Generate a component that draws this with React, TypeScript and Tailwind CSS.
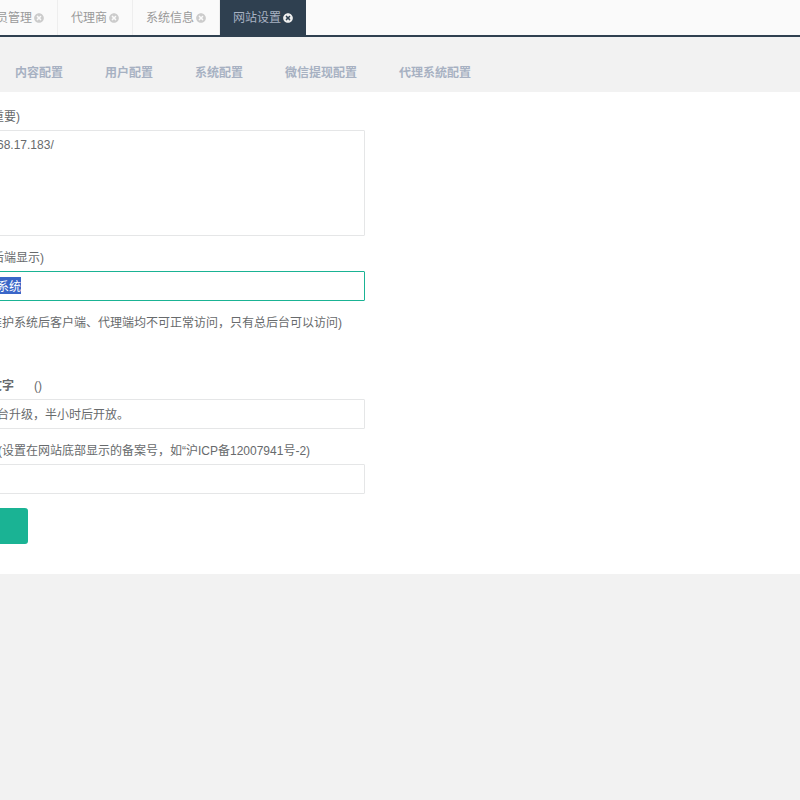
import { useEffect, useRef, useState } from "react";
import { FaTimesCircle } from "react-icons/fa";

const tabs = ["员管理", "代理商", "系统信息", "网站设置"];
const sections = ["内容配置", "用户配置", "系统配置", "微信提现配置", "代理系統配置"];

const inputClass =
  "block w-full h-[30px] border border-[#e5e6e7] rounded-[1px] bg-white px-2 pb-0.5 text-xs text-[#676a6c] outline-none focus:border-[#1ab394] selection:bg-[#3a66c8] selection:text-white";
const labelClass = "block h-4 mb-[5px] whitespace-nowrap";

export default function SiteSettings() {

  const [activeTab, setActiveTab] = useState("网站设置");
  const [domains, setDomains] = useState("68.17.183/");
  const [siteName, setSiteName] = useState("系统");
  const [notice, setNotice] = useState("台升级，半小时后开放。");
  const [icp, setIcp] = useState("");

  const nameRef = useRef<HTMLInputElement>(null);

  useEffect(() => {
    nameRef.current?.focus();
    nameRef.current?.select();
  }, []);

  const showTabs = () => {
    return tabs.map((tab) => {
      const active = tab === activeTab;
      return (
        <button
          key={tab}
          type="button"
          onClick={() => setActiveTab(tab)}
          className={
            active
              ? "flex items-center gap-0.5 h-[35px] px-[13px] bg-[#2f4050] text-[#a7b1c2]"
              : "flex items-center gap-0.5 h-[35px] px-[13px] border-r border-[#eeeeee] text-[#999999]"
          }
        >
          <span>{tab}</span>
          <FaTimesCircle size={10} className={active ? "text-[#eeeeee]" : "text-[#cccccc]"} />
        </button>
      );
    });
  };

  return (
    <div
      className="min-h-screen w-full overflow-hidden bg-[#f2f2f2] text-xs text-[#676a6c]"
      style={{ fontFamily: '"Liberation Sans", "Noto Sans CJK SC", sans-serif' }}
    >
      <div className="border-b-2 border-[#2f4050] bg-[#fafafa]">
        <div className="flex -ml-[17px] whitespace-nowrap">{showTabs()}</div>
      </div>

      <nav className="flex gap-[42px] h-[55px] pl-[15px] pt-7 whitespace-nowrap font-bold text-[#a7b1c2]">
        {sections.map((name) => (
          <a key={name} href="#">{name}</a>
        ))}
      </nav>

      <main className="bg-white pt-[17px] pb-[30px]">
        <form className="flex flex-col gap-[14px] -ml-3 w-[377px]" onSubmit={(e) => e.preventDefault()}>
          <div>
            <label htmlFor="domains" className={labelClass + " pl-1"}>重要)</label>
            <textarea
              id="domains"
              value={domains}
              onChange={(e) => setDomains(e.target.value)}
              className="block w-full h-[106px] resize-none border border-[#e5e6e7] rounded-[1px] bg-white px-2 py-1.5 text-xs text-[#676a6c] outline-none"
            />
          </div>

          <div>
            <label htmlFor="siteName" className={labelClass + " pl-1"}>后端显示)</label>
            <input
              id="siteName"
              ref={nameRef}
              value={siteName}
              onChange={(e) => setSiteName(e.target.value)}
              className={inputClass}
            />
          </div>

          <div className="h-[49px]">
            <span className={labelClass + " pl-0.5"}>维护系统后客户端、代理端均不可正常访问，只有总后台可以访问)</span>
          </div>

          <div>
            <label htmlFor="notice" className={labelClass + " pl-0.5"}>
              <b>文字</b>
              <span className="ml-5">()</span>
            </label>
            <input id="notice" value={notice} onChange={(e) => setNotice(e.target.value)} className={inputClass} />
          </div>

          <div>
            <label htmlFor="icp" className={labelClass + " pl-2.5"}>(设置在网站底部显示的备案号，如“沪ICP备12007941号-2)</label>
            <input id="icp" value={icp} onChange={(e) => setIcp(e.target.value)} className={inputClass} />
          </div>

          <button type="submit" aria-label="保存" className="h-9 w-10 rounded-[3px] bg-[#1ab394]" />
        </form>
      </main>
    </div>
  );
}
